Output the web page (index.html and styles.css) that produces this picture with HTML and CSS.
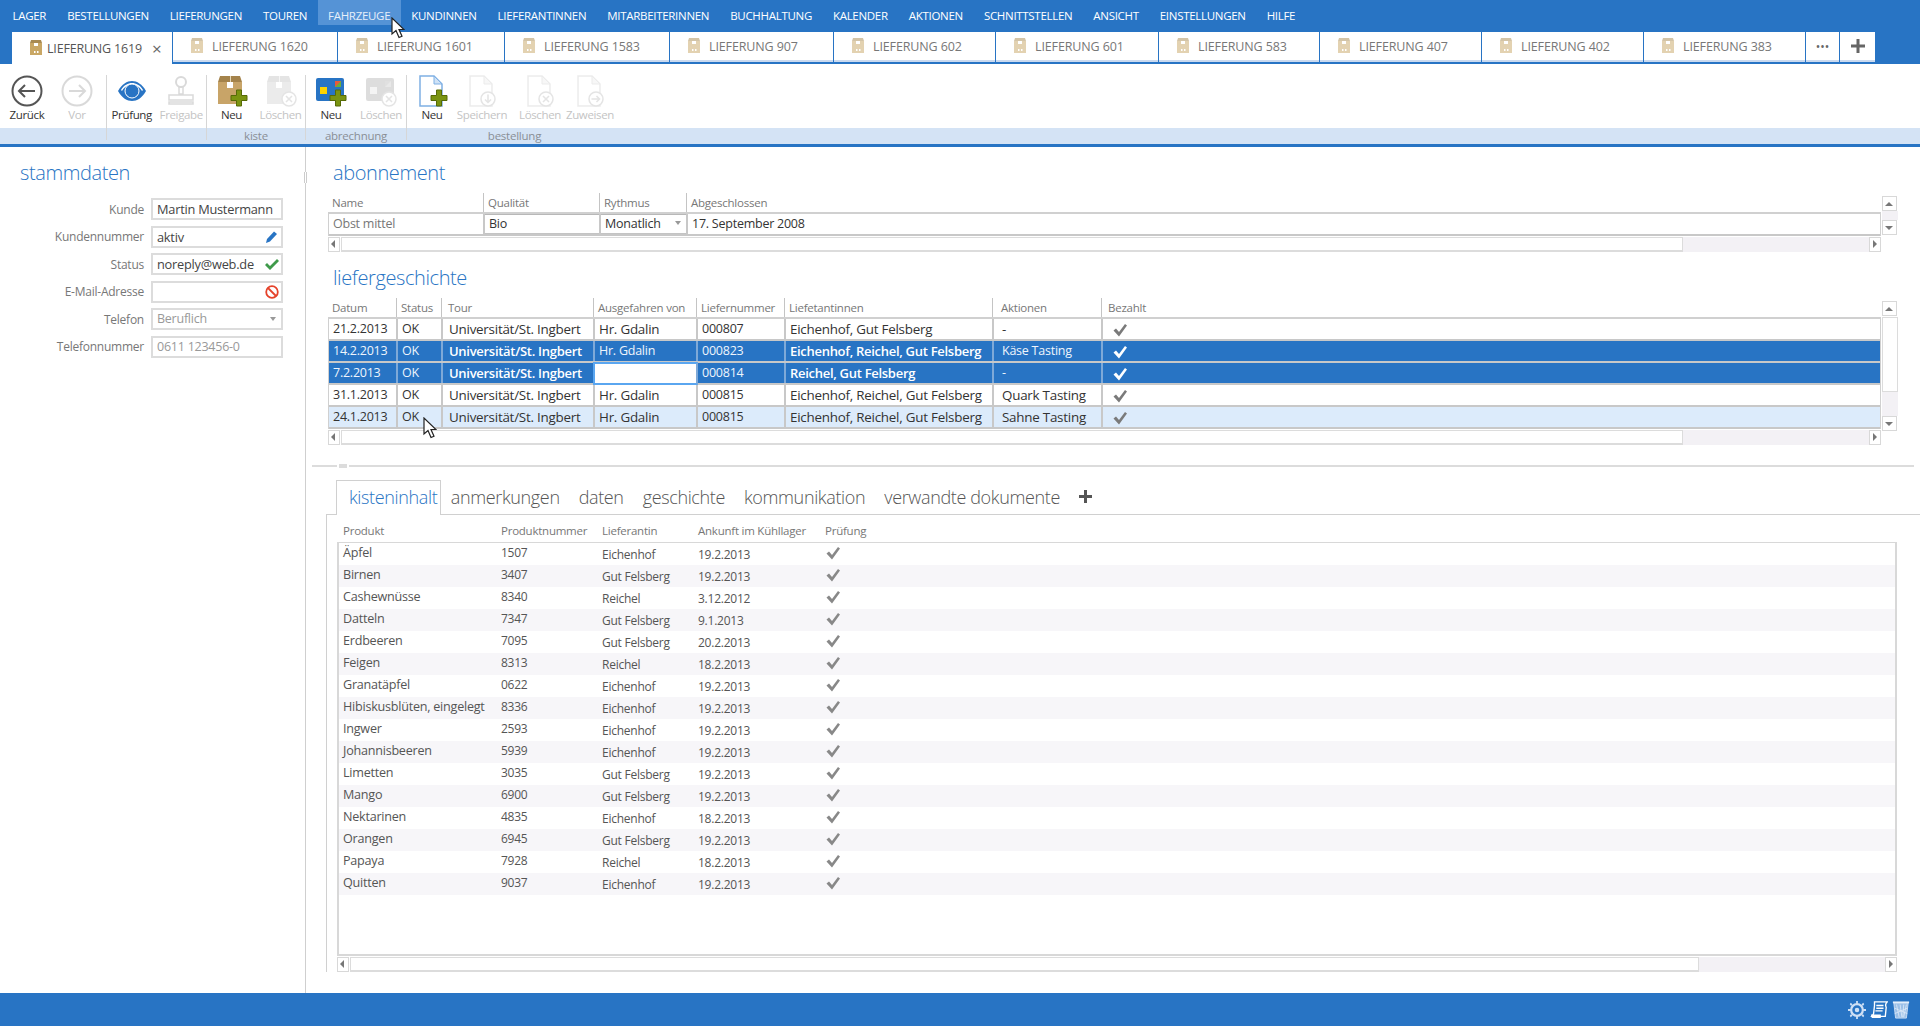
FILE: index.html
```html
<!DOCTYPE html>
<html lang="de">
<head>
    <meta charset="UTF-8">
    <title>Lieferung 1619</title>
    <link rel="stylesheet" href="styles.css">
</head>
<body>
    <!-- icon sprites -->
    <svg class="sprites" width="0" height="0">
        <symbol id="i-parcel" viewBox="0 0 14 16">
            <path d="M1 3h12v12H1z" fill="#c9a765"/>
            <path d="M2 0h10l1 3H1z" fill="#a88a52"/>
            <path d="M5 3h4v3H5zM5 11h1.500v2H5zM8 11h1.500v2H8z" fill="#fff"/>
        </symbol>
        <symbol id="i-box" viewBox="0 0 32 32">
            <path d="M2 7h24v22H2z" fill="#c8a468"/>
            <path d="M4 1h20l2 6H2z" fill="#a4834b"/>
            <path d="M11 7h6v6h-6z" fill="#fff"/>
            <path d="M14 1h1v6h-1z" fill="#e6d8b8"/>
        </symbol>
        <symbol id="i-card" viewBox="0 0 32 32">
            <rect x="1" y="3" width="28" height="23" rx="2" fill="#2874c4"/>
            <path d="M5 12h7v7H5z" fill="#ffd400"/>
            <path d="M20 6h6v6h-6z" fill="#e85a3c"/>
            <path d="M26 6v6h-6z" fill="#6cae3a"/>
        </symbol>
        <symbol id="i-doc" viewBox="0 0 32 32">
            <path d="M4 1h14l8 8v22H4z" fill="#fff" stroke="#7fb0e4" stroke-width="1.500"/>
            <path d="M18 1v8h8z" fill="#cfe2f6" stroke="#7fb0e4"/>
        </symbol>
        <symbol id="i-plus" viewBox="0 0 18 18">
            <path d="M6.500 1h5v5.500H17v5h-5.500V17h-5v-5.500H1v-5h5.500z" fill="#7a9411" stroke="#566a06"/>
        </symbol>
        <symbol id="i-del" viewBox="0 0 16 16">
            <circle cx="8" cy="8" r="7" fill="#fff" stroke="#888" stroke-width="1.500"/>
            <path d="M5 5l6 6M11 5l-6 6" stroke="#888" stroke-width="1.500"/>
        </symbol>
        <symbol id="i-down" viewBox="0 0 16 16">
            <circle cx="8" cy="8" r="7" fill="#fff" stroke="#888" stroke-width="1.500"/>
            <path d="M8 3.500v8M5 8.500l3 3 3-3" fill="none" stroke="#888" stroke-width="1.500"/>
        </symbol>
        <symbol id="i-right" viewBox="0 0 16 16">
            <circle cx="8" cy="8" r="7" fill="#fff" stroke="#888" stroke-width="1.500"/>
            <path d="M3.500 8h8M8.500 5l3 3-3 3" fill="none" stroke="#888" stroke-width="1.500"/>
        </symbol>
        <symbol id="i-check" viewBox="0 0 16 14">
            <path d="M1.500 7.500l2.500-2 3 3.500 6-8 2 1.500-8 11z"/>
        </symbol>
        <symbol id="i-cursor" viewBox="0 0 14 22">
            <path d="M1 1v16l4-3.500 3 7 3-1.300-3-6.700h5z" fill="#fff" stroke="#222" stroke-width="1.200"/>
        </symbol>
    </svg>

    <nav class="menu">
        <a>LAGER</a>
        <a>BESTELLUNGEN</a>
        <a>LIEFERUNGEN</a>
        <a>TOUREN</a>
        <a class="hover">FAHRZEUGE</a>
        <a>KUNDINNEN</a>
        <a>LIEFERANTINNEN</a>
        <a>MITARBEITERINNEN</a>
        <a>BUCHHALTUNG</a>
        <a>KALENDER</a>
        <a>AKTIONEN</a>
        <a>SCHNITTSTELLEN</a>
        <a>ANSICHT</a>
        <a>EINSTELLUNGEN</a>
        <a>HILFE</a>
    </nav>

    <div class="tabs">
        <div class="tab active"><svg class="tab-ico"><use href="#i-parcel"/></svg>LIEFERUNG 1619<span class="tab-close">×</span></div>
        <div class="tab"><svg class="tab-ico"><use href="#i-parcel"/></svg>LIEFERUNG 1620</div>
        <div class="tab"><svg class="tab-ico"><use href="#i-parcel"/></svg>LIEFERUNG 1601</div>
        <div class="tab"><svg class="tab-ico"><use href="#i-parcel"/></svg>LIEFERUNG 1583</div>
        <div class="tab"><svg class="tab-ico"><use href="#i-parcel"/></svg>LIEFERUNG 907</div>
        <div class="tab"><svg class="tab-ico"><use href="#i-parcel"/></svg>LIEFERUNG 602</div>
        <div class="tab"><svg class="tab-ico"><use href="#i-parcel"/></svg>LIEFERUNG 601</div>
        <div class="tab"><svg class="tab-ico"><use href="#i-parcel"/></svg>LIEFERUNG 583</div>
        <div class="tab"><svg class="tab-ico"><use href="#i-parcel"/></svg>LIEFERUNG 407</div>
        <div class="tab"><svg class="tab-ico"><use href="#i-parcel"/></svg>LIEFERUNG 402</div>
        <div class="tab"><svg class="tab-ico"><use href="#i-parcel"/></svg>LIEFERUNG 383</div>
        <div class="tab tab-tool dots">•••</div>
        <div class="tab tab-tool plus">
            <svg width="14" height="14" viewBox="0 0 14 14"><path d="M5.500 0h3v5.500H14v3H8.500V14h-3V8.500H0v-3h5.500z" fill="#666"/></svg>
        </div>
    </div>

    <div class="toolbar">
        <div class="tool-group group-nav">
            <div class="tool-btns">
                <div class="tool">
                    <svg class="ico" viewBox="0 0 32 32"><circle cx="16" cy="16" r="14.500" fill="none" stroke="#555" stroke-width="2"/><path d="M8 16h16M14 10l-6 6 6 6" fill="none" stroke="#555" stroke-width="2"/></svg>
                    <span>Zurück</span>
                </div>
                <div class="tool off">
                    <svg class="ico" viewBox="0 0 32 32"><circle cx="16" cy="16" r="14.500" fill="none" stroke="#555" stroke-width="2"/><path d="M8 16h16M18 10l6 6-6 6" fill="none" stroke="#555" stroke-width="2"/></svg>
                    <span>Vor</span>
                </div>
            </div>
        </div>
        <div class="tool-group group-check">
            <div class="tool-btns">
                <div class="tool">
                    <svg class="ico" viewBox="0 0 32 32"><path d="M2 16C6 9 11 6 16 6s10 3 14 10c-4 7-9 10-14 10S6 23 2 16z" fill="#2874c4"/><path d="M5 15c3-5 7-7 11-7s8 2 11 7l-1 1c-3-5-6-6-10-6s-7 1-10 6z" fill="#fff"/><circle cx="16" cy="16" r="7" fill="#2874c4" stroke="#fff"/></svg>
                    <span>Prüfung</span>
                </div>
                <div class="tool off">
                    <svg class="ico" viewBox="0 0 32 32"><circle cx="16" cy="7" r="5" fill="none" stroke="#555" stroke-width="2"/><path d="M14 12h4v7h-4zM4 20h24v5H4zM4 27h24v2H4z" fill="none" stroke="#555" stroke-width="1.500"/></svg>
                    <span>Freigabe</span>
                </div>
            </div>
        </div>
        <div class="tool-group group-two">
            <div class="tool-btns">
                <div class="tool">
                    <svg class="ico" viewBox="0 0 32 32"><use href="#i-box"/><use href="#i-plus" x="14" y="14" width="18" height="18"/></svg>
                    <span>Neu</span>
                </div>
                <div class="tool off">
                    <svg class="ico" viewBox="0 0 32 32"><use href="#i-box"/><use href="#i-del" x="16" y="16" width="16" height="16"/></svg>
                    <span>Löschen</span>
                </div>
            </div>
            <div class="tool-label">kiste</div>
        </div>
        <div class="tool-group group-two">
            <div class="tool-btns">
                <div class="tool">
                    <svg class="ico" viewBox="0 0 32 32"><use href="#i-card"/><use href="#i-plus" x="14" y="14" width="18" height="18"/></svg>
                    <span>Neu</span>
                </div>
                <div class="tool off">
                    <svg class="ico" viewBox="0 0 32 32"><use href="#i-card"/><use href="#i-del" x="16" y="16" width="16" height="16"/></svg>
                    <span>Löschen</span>
                </div>
            </div>
            <div class="tool-label">abrechnung</div>
        </div>
        <div class="tool-group group-order">
            <div class="tool-btns">
                <div class="tool">
                    <svg class="ico" viewBox="0 0 32 32"><use href="#i-doc"/><use href="#i-plus" x="14" y="14" width="18" height="18"/></svg>
                    <span>Neu</span>
                </div>
                <div class="tool off">
                    <svg class="ico" viewBox="0 0 32 32"><use href="#i-doc"/><use href="#i-down" x="14" y="16" width="16" height="16"/></svg>
                    <span>Speichern</span>
                </div>
                <div class="tool off wide-left">
                    <svg class="ico" viewBox="0 0 32 32"><use href="#i-doc"/><use href="#i-del" x="14" y="16" width="16" height="16"/></svg>
                    <span>Löschen</span>
                </div>
                <div class="tool off">
                    <svg class="ico" viewBox="0 0 32 32"><use href="#i-doc"/><use href="#i-right" x="14" y="16" width="16" height="16"/></svg>
                    <span>Zuweisen</span>
                </div>
            </div>
            <div class="tool-label">bestellung</div>
        </div>
    </div>

    <div class="main">
        <aside class="side">
            <h2>stammdaten</h2>
            <div class="form">
                <label>Kunde</label>
                <div class="field">Martin Mustermann</div>
                <label>Kundennummer</label>
                <div class="field">aktiv
                    <svg class="field-ico" viewBox="0 0 14 14"><path d="M1 13l1-4 7-7.500 3 2.500-7 7.500z" fill="#2874c4"/></svg>
                </div>
                <label>Status</label>
                <div class="field">noreply@web.de
                    <svg class="field-ico" viewBox="0 0 14 14"><path d="M0 8l2-2 3 3 7-7 2 2-9 9z" fill="#3f9a4a"/></svg>
                </div>
                <label>E-Mail-Adresse</label>
                <div class="field">
                    <svg class="field-ico" viewBox="0 0 14 14"><circle cx="7" cy="7" r="5.800" fill="none" stroke="#e5432b" stroke-width="1.800"/><path d="M3 3l8 8" stroke="#e5432b" stroke-width="1.800"/></svg>
                </div>
                <label>Telefon</label>
                <div class="field muted">Beruflich<i class="caret"></i></div>
                <label>Telefonnummer</label>
                <div class="field muted">0611 123456-0</div>
            </div>
            <i class="side-grip"></i>
        </aside>

        <section class="content">
            <div class="block">
                <h2>abonnement</h2>
                <div class="grid-wrap">
                    <div class="grid-main">
                        <div class="head cols-abo">
                            <div>Name</div><div>Qualität</div><div>Rythmus</div><div class="no-rule">Abgeschlossen</div>
                        </div>
                        <div class="rows">
                            <div class="row cols-abo">
                                <div class="c-muted">Obst mittel</div>
                                <div class="c-box">Bio</div>
                                <div class="c-box">Monatlich<i class="caret"></i></div>
                                <div>17. September 2008</div>
                            </div>
                        </div>
                        <div class="hscroll"><i class="sb-btn arrow-l"></i><i class="sb-thumb"></i><i class="sb-rest"></i><i class="sb-btn arrow-r"></i></div>
                    </div>
                    <div class="vscroll vscroll-abo"><i class="sb-btn arrow-u"></i><i class="sb-track"></i><i class="sb-btn arrow-d"></i></div>
                </div>
            </div>

            <div class="block block-deliveries">
                <h2>liefergeschichte</h2>
                <div class="grid-wrap">
                    <div class="grid-main">
                        <div class="head cols-del">
                            <div>Datum</div><div>Status</div><div class="pad">Tour</div><div>Ausgefahren von</div><div>Liefernummer</div><div>Liefetantinnen</div><div class="pad-wide">Aktionen</div><div class="pad">Bezahlt</div>
                        </div>
                        <div class="rows">
                            <div class="row cols-del">
                                <div>21.2.2013</div><div>OK</div><div class="txt pad">Universität/St. Ingbert</div><div class="txt">Hr. Gdalin</div><div>000807</div><div class="txt">Eichenhof, Gut Felsberg</div><div class="txt pad-wide">-</div>
                                <div><svg class="check"><use href="#i-check"/></svg></div>
                            </div>
                            <div class="row sel cols-del">
                                <div>14.2.2013</div><div>OK</div><div class="strong pad">Universität/St. Ingbert</div><div>Hr. Gdalin</div><div>000823</div><div class="strong">Eichenhof, Reichel, Gut Felsberg</div><div class="pad-wide">Käse Tasting</div>
                                <div><svg class="check"><use href="#i-check"/></svg></div>
                            </div>
                            <div class="row sel cols-del">
                                <div>7.2.2013</div><div>OK</div><div class="strong pad">Universität/St. Ingbert</div><div class="editing"></div><div>000814</div><div class="strong">Reichel, Gut Felsberg</div><div class="pad-wide">-</div>
                                <div><svg class="check"><use href="#i-check"/></svg></div>
                            </div>
                            <div class="row cols-del">
                                <div>31.1.2013</div><div>OK</div><div class="txt pad">Universität/St. Ingbert</div><div class="txt">Hr. Gdalin</div><div>000815</div><div class="txt">Eichenhof, Reichel, Gut Felsberg</div><div class="txt pad-wide">Quark Tasting</div>
                                <div><svg class="check"><use href="#i-check"/></svg></div>
                            </div>
                            <div class="row over cols-del">
                                <div>24.1.2013</div><div>OK</div><div class="txt pad">Universität/St. Ingbert</div><div class="txt">Hr. Gdalin</div><div>000815</div><div class="txt">Eichenhof, Reichel, Gut Felsberg</div><div class="txt pad-wide">Sahne Tasting</div>
                                <div><svg class="check"><use href="#i-check"/></svg></div>
                            </div>
                        </div>
                        <div class="hscroll"><i class="sb-btn arrow-l"></i><i class="sb-thumb"></i><i class="sb-rest"></i><i class="sb-btn arrow-r"></i></div>
                    </div>
                    <div class="vscroll vscroll-del"><i class="sb-btn arrow-u"></i><i class="sb-thumb-v"></i><i class="sb-track"></i><i class="sb-btn arrow-d"></i></div>
                </div>
            </div>

            <div class="splitter"><i></i></div>

            <div class="subtabs">
                <a class="active">kisteninhalt</a>
                <a>anmerkungen</a>
                <a>daten</a>
                <a>geschichte</a>
                <a>kommunikation</a>
                <a>verwandte dokumente</a>
                <svg class="subtabs-plus" width="13" height="13" viewBox="0 0 13 13"><path d="M5 0h3v5h5v3H8v5H5V8H0V5h5z" fill="#555"/></svg>
            </div>
            <div class="subpanel">
                <div class="prod-head cols-prod">
                    <div>Produkt</div><div>Produktnummer</div><div>Lieferantin</div><div>Ankunft im Kühllager</div><div>Prüfung</div>
                </div>
                <div class="prod-list">
                    <div class="prod cols-prod"><div class="name">Äpfel</div><div>1507</div><div class="low">Eichenhof</div><div class="low">19.2.2013</div><svg class="check"><use href="#i-check"/></svg></div>
                    <div class="prod cols-prod"><div class="name">Birnen</div><div>3407</div><div class="low">Gut Felsberg</div><div class="low">19.2.2013</div><svg class="check"><use href="#i-check"/></svg></div>
                    <div class="prod cols-prod"><div class="name">Cashewnüsse</div><div>8340</div><div class="low">Reichel</div><div class="low">3.12.2012</div><svg class="check"><use href="#i-check"/></svg></div>
                    <div class="prod cols-prod"><div class="name">Datteln</div><div>7347</div><div class="low">Gut Felsberg</div><div class="low">9.1.2013</div><svg class="check"><use href="#i-check"/></svg></div>
                    <div class="prod cols-prod"><div class="name">Erdbeeren</div><div>7095</div><div class="low">Gut Felsberg</div><div class="low">20.2.2013</div><svg class="check"><use href="#i-check"/></svg></div>
                    <div class="prod cols-prod"><div class="name">Feigen</div><div>8313</div><div class="low">Reichel</div><div class="low">18.2.2013</div><svg class="check"><use href="#i-check"/></svg></div>
                    <div class="prod cols-prod"><div class="name">Granatäpfel</div><div>0622</div><div class="low">Eichenhof</div><div class="low">19.2.2013</div><svg class="check"><use href="#i-check"/></svg></div>
                    <div class="prod cols-prod"><div class="name">Hibiskusblüten, eingelegt</div><div>8336</div><div class="low">Eichenhof</div><div class="low">19.2.2013</div><svg class="check"><use href="#i-check"/></svg></div>
                    <div class="prod cols-prod"><div class="name">Ingwer</div><div>2593</div><div class="low">Eichenhof</div><div class="low">19.2.2013</div><svg class="check"><use href="#i-check"/></svg></div>
                    <div class="prod cols-prod"><div class="name">Johannisbeeren</div><div>5939</div><div class="low">Eichenhof</div><div class="low">19.2.2013</div><svg class="check"><use href="#i-check"/></svg></div>
                    <div class="prod cols-prod"><div class="name">Limetten</div><div>3035</div><div class="low">Gut Felsberg</div><div class="low">19.2.2013</div><svg class="check"><use href="#i-check"/></svg></div>
                    <div class="prod cols-prod"><div class="name">Mango</div><div>6900</div><div class="low">Gut Felsberg</div><div class="low">19.2.2013</div><svg class="check"><use href="#i-check"/></svg></div>
                    <div class="prod cols-prod"><div class="name">Nektarinen</div><div>4835</div><div class="low">Eichenhof</div><div class="low">18.2.2013</div><svg class="check"><use href="#i-check"/></svg></div>
                    <div class="prod cols-prod"><div class="name">Orangen</div><div>6945</div><div class="low">Gut Felsberg</div><div class="low">19.2.2013</div><svg class="check"><use href="#i-check"/></svg></div>
                    <div class="prod cols-prod"><div class="name">Papaya</div><div>7928</div><div class="low">Reichel</div><div class="low">18.2.2013</div><svg class="check"><use href="#i-check"/></svg></div>
                    <div class="prod cols-prod"><div class="name">Quitten</div><div>9037</div><div class="low">Eichenhof</div><div class="low">19.2.2013</div><svg class="check"><use href="#i-check"/></svg></div>
                </div>
                <div class="hscroll hscroll-prod"><i class="sb-btn arrow-l"></i><i class="sb-thumb"></i><i class="sb-rest"></i><i class="sb-btn arrow-r"></i></div>
            </div>
        </section>
    </div>

    <footer class="statusbar">
        <svg class="status-ico" viewBox="0 0 20 20"><circle cx="10" cy="10" r="6.500" fill="none" stroke="#cfe0f5" stroke-width="2.500"/><circle cx="10" cy="10" r="2.500" fill="#cfe0f5"/><path d="M9 0h2v3H9zM9 17h2v3H9zM0 9h3v2H0zM17 9h3v2h-3zM3 2l2 1.500-1.500 2L2 3.500zM17 2l-2 1.500 1.500 2L18 3.500zM3 18l2-1.500-1.500-2L2 16.500zM17 18l-2-1.500 1.500-2L18 16.500z" fill="#cfe0f5"/></svg>
        <svg class="status-ico" viewBox="0 0 20 20"><path d="M5 1h14c-2 2-2 4-1 6l-1 10H2c1-1 2-2 2-3L5 5z" fill="none" stroke="#fff" stroke-width="1.500"/><path d="M7 5h8M7 8h8M6 11h8" stroke="#fff" stroke-width="1.500"/><path d="M1 15h11v4H2z" fill="#fff"/></svg>
        <svg class="status-ico" viewBox="0 0 20 20"><path d="M2 2h16l-2 17H4z" fill="#9cc0e8" stroke="#cfe0f5"/><path d="M5 4l3 14M9 4l2 14M13 4l-1 14M16 4l-3 14M3 8l14 6M17 8L3 14" stroke="#e4eefa" stroke-width=".8"/><path d="M1 1.500h18" stroke="#e4eefa" stroke-width="2"/></svg>
    </footer>

    <svg class="cursor cursor-menu"><use href="#i-cursor"/></svg>
    <svg class="cursor cursor-grid"><use href="#i-cursor"/></svg>
</body>
</html>
```

FILE: styles.css
```css
* {
    margin: 0;
    padding: 0;
    box-sizing: border-box;
}

body {
    font-family: 'Open Sans', 'Liberation Sans', sans-serif;
    font-size: 12px;
    letter-spacing: -0.02em;
    color: #444;
    background: #fff;
    height: 1026px;
    display: flex;
    flex-direction: column;
    overflow: hidden;
    position: relative;
}

.sprites {
    position: absolute;
}

h2 {
    font-weight: 300;
    font-size: 20px;
    line-height: 24px;
    color: #2874c4;
    letter-spacing: -0.02em;
}

/* top menu */
.menu {
    height: 32px;
    background: #2874c4;
    display: flex;
    padding-left: 2px;
    flex: none;
}

.menu a {
    height: 25px;
    line-height: 31px;
    padding: 0 10.5px;
    color: #fff;
    font-size: 11.500px;
    letter-spacing: -0.026em;
    white-space: nowrap;
}

.menu a.hover {
    background: #5593d6;
    color: #e6effa;
}

/* document tabs */
.tabs {
    height: 32px;
    background: #2874c4;
    display: grid;
    grid-template-columns: 160px 164px 166px 164px 163px 161px 162px 160px 161px 161px 161px 33px 35px;
    column-gap: 1px;
    padding-left: 12px;
    flex: none;
}

.tab {
    background: #fff;
    height: 30px;
    border-bottom: 2px solid #cbdaef;
    display: flex;
    align-items: center;
    padding-left: 17px;
    color: #777;
    font-size: 12.500px;
    letter-spacing: -0.01em;
    white-space: nowrap;
}

.tab-ico {
    width: 14px;
    height: 16px;
    margin-right: 8px;
    opacity: .5;
    flex: none;
}

.tab.active {
    height: 32px;
    border-bottom: 0;
    color: #555;
    letter-spacing: -0.015em;
}

.tab.active .tab-ico {
    opacity: 1;
    margin-right: 4px;
}

.tab-close {
    margin-left: 10px;
    font-size: 17px;
    line-height: 1;
    color: #666;
}

.tab-tool {
    justify-content: center;
    padding-left: 0;
    color: #666;
}

.dots {
    font-size: 12px;
    letter-spacing: 0;
}

/* toolbar */
.toolbar {
    height: 83px;
    flex: none;
    display: flex;
    background: linear-gradient(#fff 64px, #d4e3f5 64px, #d4e3f5 80px, #2874c4 80px);
}

.tool-group {
    margin-top: 11px;
    height: 65px;
    border-right: 1px solid #d6d6d6;
    position: relative;
}

.tool-btns {
    display: flex;
}

.group-nav {
    width: 107px;
    padding-left: 2px;
}

.group-check {
    width: 100px;
}

.group-two {
    width: 99px;
}

.group-two + .group-two {
    width: 101px;
}

.group-order {
    width: 215px;
    border-right: 0;
}

.tool {
    width: 50px;
    display: flex;
    flex-direction: column;
    align-items: center;
    color: #333;
    font-size: 11.500px;
    letter-spacing: -0.03em;
    white-space: nowrap;
}

.tool .ico {
    width: 32px;
    height: 32px;
}

.tool.off {
    color: #c4c4c4;
}

.tool.off .ico {
    filter: grayscale(1);
    opacity: .22;
}

.tool.wide-left {
    margin-left: 8px;
}

.tool-label {
    position: absolute;
    left: 0;
    right: 0;
    bottom: -4px;
    text-align: center;
    font-size: 11.500px;
    line-height: 16px;
    color: #8a8f96;
}

/* main area */
.main {
    flex: 1;
    display: flex;
    min-height: 0;
}

.side {
    width: 306px;
    flex: none;
    border-right: 1px solid #cfcfcf;
    padding: 14px 0 0 20px;
    position: relative;
}

.side-grip {
    position: absolute;
    right: -2px;
    top: 25px;
    width: 3px;
    height: 11px;
    background: #fff;
    border-left: 1px solid #ccc;
    border-right: 1px solid #ccc;
}

.form {
    margin-top: 13px;
    display: grid;
    grid-template-columns: 124px 132px;
    column-gap: 7px;
    row-gap: 5.500px;
    grid-auto-rows: 22px;
    align-items: center;
}

.form label {
    text-align: right;
    color: #777;
}

.field {
    height: 22px;
    line-height: 18px;
    border: 2px solid #dcdcdc;
    padding-left: 4px;
    color: #444;
    font-size: 12.800px;
    position: relative;
    white-space: nowrap;
}

.field.muted {
    color: #999;
    font-size: 12.500px;
}

.field-ico {
    position: absolute;
    right: 2px;
    top: 2px;
    width: 14px;
    height: 14px;
}

.caret {
    position: absolute;
    right: 5px;
    top: 7px;
    border: 3.500px solid transparent;
    border-top: 4px solid #999;
    border-bottom: 0;
}

.content {
    flex: 1;
    padding: 14px 0 0 6px;
    min-width: 0;
}

.block {
    margin: 0 22px 0 16px;
}

.block h2 {
    margin-left: 5px;
}

.block-deliveries {
    margin-top: 14px;
}

.grid-wrap {
    display: flex;
    margin-top: 8px;
}

.grid-main {
    flex: 1;
    min-width: 0;
}

.head {
    display: grid;
    height: 19px;
    color: #777;
    font-size: 11.500px;
    line-height: 19px;
}

.head > div {
    padding-left: 4px;
    border-right: 1px solid #c4c4c4;
    white-space: nowrap;
}

.head > div:last-child,
.head > .no-rule {
    border-right: 0;
}

.rows {
    border: solid #d0d0d0;
    border-width: 2px 0 0 1px;
    border-right: 1px solid #d0d0d0;
}

.row {
    display: grid;
    height: 22px;
    line-height: 20px;
    border-bottom: 2px solid #c8c8c8;
    color: #333;
    font-size: 12.500px;
    white-space: nowrap;
}

.row > div {
    padding-left: 4px;
    border-right: 2px solid #c8c8c8;
    position: relative;
    overflow: hidden;
}

.row > div:last-child {
    border-right: 0;
}

.head > .pad,
.row > .pad {
    padding-left: 6px;
}

.head > .pad-wide,
.row > .pad-wide {
    padding-left: 8px;
}

.row > .txt {
    font-size: 13.400px;
}

.cols-abo {
    grid-template-columns: 156px 116px 87px 1fr;
}

.cols-del {
    grid-template-columns: 69px 45px 152px 103px 88px 208px 109px 1fr;
}

.row.sel {
    background: #2874c4;
    color: #eef4fc;
}

.row.sel > div {
    border-right-color: #7ea9d8;
}

.row.sel .strong {
    color: #fff;
    font-size: 13px;
    font-weight: 600;
    letter-spacing: -0.022em;
}

.row.over {
    background: #dcebfb;
}

.row .editing {
    background: #fff;
    border: 2px solid #5aa6f0;
    margin: -1px 0 -2px -2px;
}

.c-muted {
    color: #777;
}

.row .c-box {
    box-shadow: inset 0 1px #b8b8b8, inset 0 -1px #c4c4c4;
}

.check {
    width: 16px;
    height: 14px;
    margin: 4px 0 0 5px;
    fill: #7a7a7a;
}

.row.sel .check {
    fill: #fff;
}

/* scrollbars */
.hscroll {
    display: flex;
    height: 15px;
    margin-top: 1px;
}

.sb-btn {
    display: block;
    width: 12px;
    height: 15px;
    border: 1px solid #d8d8d8;
    position: relative;
    flex: none;
}

.sb-btn::after {
    content: '';
    position: absolute;
    left: 50%;
    top: 50%;
    border: 4.500px solid transparent;
}

.arrow-l::after {
    border-right-color: #777;
    border-left: 0;
    margin: -4.500px 0 0 -3px;
}

.arrow-r::after {
    border-left-color: #777;
    border-right: 0;
    margin: -4.500px 0 0 -2px;
}

.arrow-u::after {
    border-bottom-color: #777;
    border-top: 0;
    margin: -2px 0 0 -4.500px;
}

.arrow-d::after {
    border-top-color: #777;
    border-bottom: 0;
    margin: -2px 0 0 -4.500px;
}

.sb-thumb {
    flex: 1;
    display: block;
    margin-left: 1px;
    border: 1px solid #dcdcdc;
    border-width: 1px 1px 2px 1px;
}

.sb-rest {
    display: block;
    width: 186px;
    background: #f3f1f5;
    flex: none;
}

.vscroll {
    width: 16px;
    flex: none;
    margin-left: 1px;
    display: flex;
    flex-direction: column;
}

.vscroll .sb-btn {
    width: 15px;
    height: 15px;
}

.vscroll-abo {
    margin-top: 3px;
    height: 39px;
}

.vscroll-del {
    margin-top: 3px;
    height: 130px;
}

.sb-track {
    display: block;
    flex: 1;
    background: #f3f1f5;
}

.sb-thumb-v {
    display: block;
    height: 75px;
    margin-top: 1px;
    border: 1px solid #dcdcdc;
}

/* splitter + lower tabs */
.splitter {
    margin: 20px 6px 0 0;
    height: 2px;
    background: #dcdcdc;
    position: relative;
}

.splitter i {
    position: absolute;
    left: 25px;
    top: -1px;
    width: 12px;
    height: 4px;
    background: #dcdcdc;
    border-left: 2px solid #fff;
    border-right: 2px solid #fff;
}

.subtabs {
    margin: 14px 0 0 24px;
    height: 33px;
    display: flex;
    align-items: flex-end;
    position: relative;
    z-index: 1;
}

.subtabs a {
    font-size: 18px;
    font-weight: 300;
    line-height: 32px;
    padding: 0 9.500px 1px 9.500px;
    color: #555;
    white-space: nowrap;
    letter-spacing: -0.02em;
}

.subtabs a.active {
    color: #2874c4;
    background: #fff;
    height: 35px;
    margin-bottom: -1px;
    border: 1px solid #d0d0d0;
    border-bottom: 0;
    padding: 0 3px 0 12px;
}

.subtabs-plus {
    margin: 0 0 11px 10px;
}

.subpanel {
    border-top: 1px solid #d0d0d0;
    border-left: 1px solid #d0d0d0;
    margin-left: 14px;
    padding: 8px 23px 0 10px;
}

.prod-head {
    height: 19px;
    color: #777;
    font-size: 11.500px;
    padding-left: 6px;
    white-space: nowrap;
}

.cols-prod {
    display: grid;
    grid-template-columns: 158px 101px 96px 127px 1fr;
}

.prod-list {
    height: 414px;
    border: 2px solid #d8d8d8;
    border-width: 1px 2px 2px 2px;
}

.prod {
    height: 22px;
    line-height: 19px;
    padding-left: 4px;
    color: #555;
    font-size: 12px;
    white-space: nowrap;
}

.prod:nth-child(even) {
    background: #f7f6f9;
}

.prod .name {
    font-size: 12.600px;
}

.prod .low {
    padding-top: 2px;
}

.prod .check {
    margin: 3px 0 0 0;
    fill: #888;
}

.hscroll-prod {
    margin-top: 1px;
}

/* footer */
.statusbar {
    height: 33px;
    flex: none;
    background: #2874c4;
    display: flex;
    justify-content: flex-end;
    align-items: center;
    gap: 4px;
    padding-right: 10px;
}

.status-ico {
    width: 18px;
    height: 18px;
}

.cursor {
    position: absolute;
    width: 14px;
    height: 22px;
    z-index: 5;
}

.cursor-menu {
    left: 391px;
    top: 17px;
}

.cursor-grid {
    left: 423px;
    top: 417px;
}
```
